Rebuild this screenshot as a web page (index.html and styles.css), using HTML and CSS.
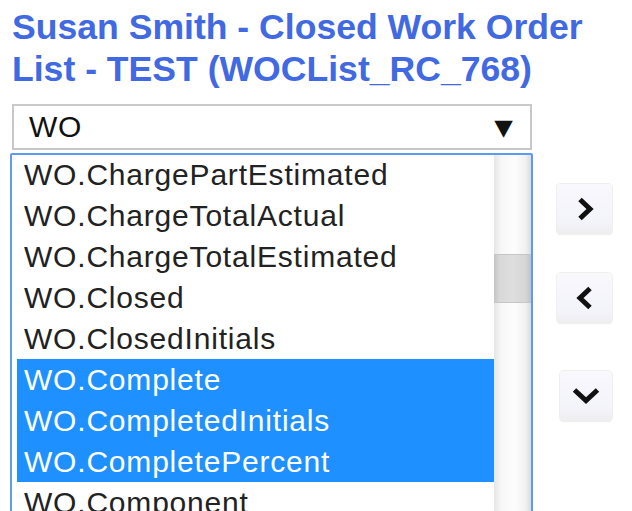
FILE: index.html
```html
<!DOCTYPE html>
<html>
<head>
<meta charset="utf-8">
<link rel="stylesheet" href="styles.css">
</head>
<body>
<div class="page">
  <h1 class="title">Susan Smith - Closed Work Order List - TEST (WOCList_RC_768)</h1>
  <div class="picker">
    <div class="left">
      <div class="select">
        <span class="select-text">WO</span>
        <span class="select-arrow">&#9660;</span>
      </div>
      <div class="listbox">
        <ul class="items">
          <li class="item">WO.ChargePartEstimated</li>
          <li class="item">WO.ChargeTotalActual</li>
          <li class="item">WO.ChargeTotalEstimated</li>
          <li class="item">WO.Closed</li>
          <li class="item">WO.ClosedInitials</li>
          <li class="item sel">WO.Complete</li>
          <li class="item sel">WO.CompletedInitials</li>
          <li class="item sel">WO.CompletePercent</li>
          <li class="item">WO.Component</li>
        </ul>
        <div class="scrollbar"><div class="thumb"></div></div>
      </div>
    </div>
    <div class="buttons">
      <button class="btn btn-right" aria-label="Add">
        <svg width="22" height="28" viewBox="0 0 22 28"><path d="M6 4.5 L16 14 L6 23.5" fill="none" stroke="#111" stroke-width="5" stroke-linejoin="miter"/></svg>
      </button>
      <button class="btn btn-left" aria-label="Remove">
        <svg width="22" height="28" viewBox="0 0 22 28"><path d="M16 4.5 L6 14 L16 23.5" fill="none" stroke="#111" stroke-width="5" stroke-linejoin="miter"/></svg>
      </button>
      <button class="btn btn-down" aria-label="Down">
        <svg width="32" height="22" viewBox="0 0 32 22"><path d="M4.5 5 L16 15.5 L27.5 5" fill="none" stroke="#111" stroke-width="5" stroke-linejoin="miter"/></svg>
      </button>
    </div>
  </div>
</div>
</body>
</html>
```

FILE: styles.css
```css
html, body {
  margin: 0;
  padding: 0;
  background: #fff;
  overflow: hidden;
  height: 511px;
}

.page {
  font-family: "Liberation Sans", Arial, sans-serif;
  padding: 6px 0 0 12px;
  height: 505px;
  overflow: hidden;
}

.title {
  margin: 0;
  width: 605px;
  font-size: 35.6px;
  line-height: 42px;
  font-weight: bold;
  color: #4169e1;
}

.picker {
  display: flex;
  align-items: flex-start;
  margin-top: 14px;
}

.left {
  display: flex;
  flex-direction: column;
  width: 520px;
}

.select {
  box-sizing: border-box;
  width: 520px;
  height: 46px;
  border: 2px solid #c8c8c8;
  display: flex;
  align-items: center;
  justify-content: space-between;
  padding: 0 18px 0 15px;
  color: #111;
}

.select-text {
  font-size: 30px;
  letter-spacing: 0.8px;
}

.select-arrow {
  font-size: 22px;
  transform: scaleX(1.1);
  font-family: "DejaVu Sans", sans-serif;
}

.listbox {
  box-sizing: border-box;
  margin: 3px 0 0 -2px;
  width: 523px;
  height: 400px;
  border: 2px solid #5b9bf2;
  border-radius: 2px;
  display: flex;
  padding-left: 5px;
  overflow: hidden;
}

.items {
  list-style: none;
  margin: -1px 0 0;
  padding: 0;
  flex: 1;
}

.item {
  height: 41px;
  line-height: 41px;
  font-size: 30px;
  letter-spacing: 0.8px;
  padding-left: 7px;
  color: #222;
  white-space: nowrap;
}

.item.sel {
  background: #1e90ff;
  color: #fff;
}

.scrollbar {
  width: 37px;
  flex: none;
  background: linear-gradient(to right, #e6e6e6 0%, #f7f7f7 20%, #fdfdfd 55%, #f1f1f1 85%, #dcdcdc 100%);
  position: relative;
}

.thumb {
  position: absolute;
  left: 0;
  right: 0;
  top: 99px;
  height: 49px;
  background: linear-gradient(to right, #c4c4c4 0%, #d8d8d8 15%, #dedede 50%, #d6d6d6 85%, #c2c2c2 100%);
  box-shadow: inset 0 0 0 1px #c6c6c6;
}

.buttons {
  display: flex;
  flex-direction: column;
  align-items: flex-end;
  width: 55px;
  margin-left: 25px;
  padding-top: 80px;
}

.btn {
  box-sizing: border-box;
  width: 55px;
  height: 50px;
  border: none;
  border-radius: 4px;
  background: linear-gradient(to bottom, #f8f8fd 0%, #f3f3fa 75%, #eeeef0 100%);
  box-shadow: 0 0 0 1px #f0efea, 0 1px 1px #e6e2d8;
  display: flex;
  align-items: center;
  justify-content: center;
  padding: 0;
}

.btn-left {
  margin-top: 39px;
}

.btn-down {
  margin-top: 48px;
  width: 52px;
}
```
